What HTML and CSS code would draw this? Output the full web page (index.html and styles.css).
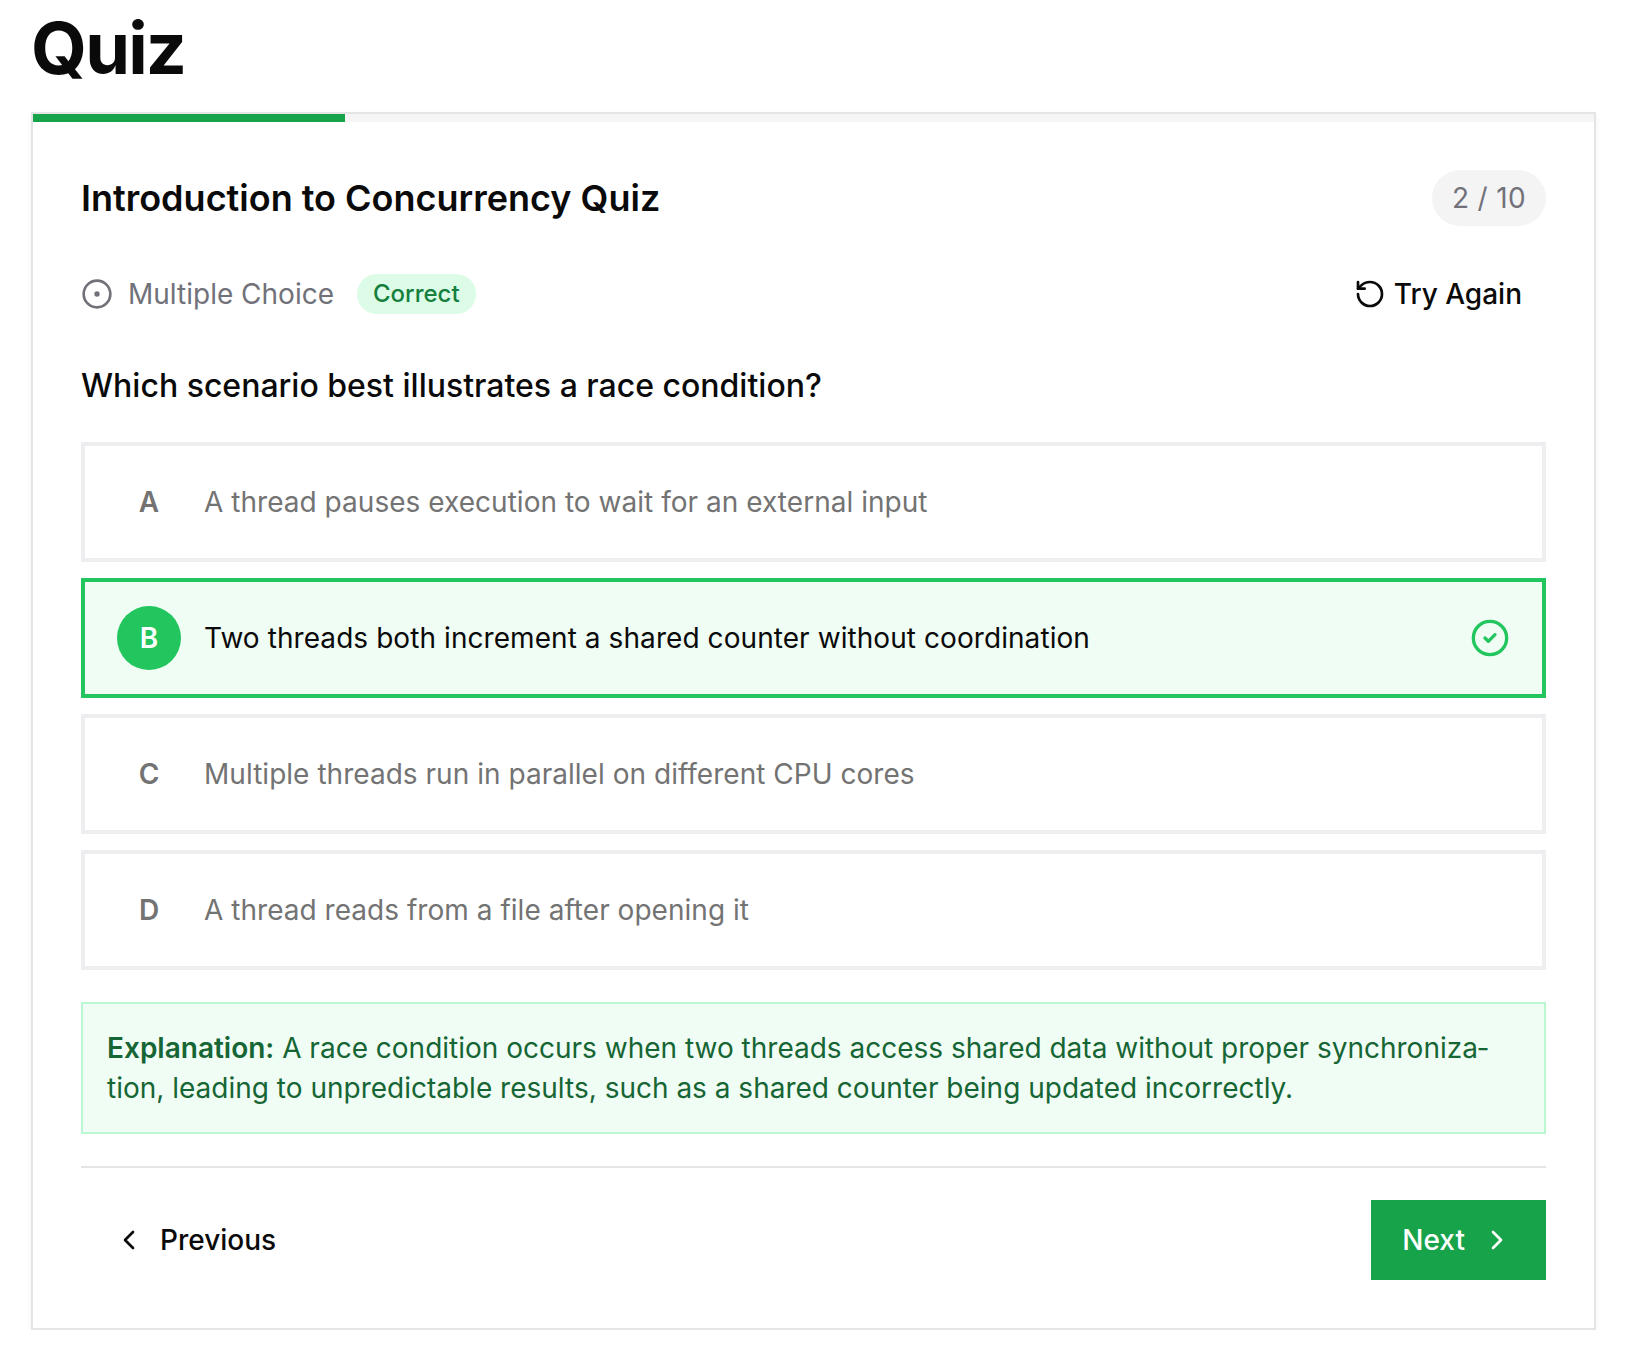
FILE: index.html
```html
<!DOCTYPE html>
<html lang="en">
  <head>
    <meta charset="UTF-8" />
    <meta name="viewport" content="width=device-width, initial-scale=1.0" />
    <title>Quiz</title>
    <link rel="stylesheet" href="styles.css">
  </head>
  <body>
    <h1 class="page-title">Quiz</h1>
    <div class="card">
      <div class="progress"><div class="progress-fill"></div></div>
      <div class="card-body">
        <div class="quiz-header">
          <h2 class="quiz-title">Introduction to Concurrency Quiz</h2>
          <div class="counter">2 / 10</div>
        </div>

        <div class="meta-row">
          <div class="meta">
            <svg class="icon" viewBox="0 0 24 24"><circle cx="12" cy="12" r="10"/><circle cx="12" cy="12" r="1"/></svg>
            <span>Multiple Choice</span>
            <span class="badge">Correct</span>
          </div>
          <button class="try-btn">
            <svg class="icon" viewBox="0 0 24 24"><path d="M3 12a9 9 0 1 0 9-9 9.75 9.75 0 0 0-6.74 2.74L3 8"/><path d="M3 3v5h5"/></svg>
            Try Again
          </button>
        </div>

        <div class="question">Which scenario best illustrates a race condition?</div>

        <div class="options">
          <div class="option">
            <div class="letter">A</div>
            <div class="option-text">A thread pauses execution to wait for an external input</div>
          </div>
          <div class="option correct">
            <div class="letter">B</div>
            <div class="option-text">Two threads both increment a shared counter without coordination</div>
            <svg class="check" viewBox="0 0 24 24"><circle cx="12" cy="12" r="10"/><path d="m9 12 2 2 4-4"/></svg>
          </div>
          <div class="option">
            <div class="letter">C</div>
            <div class="option-text">Multiple threads run in parallel on different CPU cores</div>
          </div>
          <div class="option">
            <div class="letter">D</div>
            <div class="option-text">A thread reads from a file after opening it</div>
          </div>
        </div>

        <div class="explanation">
          <strong>Explanation:</strong> A race condition occurs when two threads access shared data without proper synchroniza&shy;tion, leading to unpredictable results, such as a shared counter being updated incorrectly.
        </div>

        <div class="footer">
          <button class="nav-btn">
            <svg class="icon" viewBox="0 0 24 24"><path d="m15 18-6-6 6-6"/></svg>
            Previous
          </button>
          <button class="nav-btn next">
            Next
            <svg class="icon" viewBox="0 0 24 24"><path d="m9 18 6-6-6-6"/></svg>
          </button>
        </div>
      </div>
    </div>
  </body>
</html>
```

FILE: styles.css
```css
* {
  box-sizing: border-box;
}
body {
  margin: 0;
  padding: 0 30px 0 31px;
  font-family: Inter, "Noto Sans", sans-serif;
  color: #0a0a0a;
  background: #fff;
}
button {
  font-family: inherit;
}
.icon {
  width: 32px;
  height: 32px;
  flex-shrink: 0;
  fill: none;
  stroke: currentColor;
  stroke-width: 2;
  stroke-linecap: round;
  stroke-linejoin: round;
}
.page-title {
  margin: 0 0 16px;
  font-size: 72px;
  line-height: 96px;
  font-weight: 700;
  letter-spacing: -1.8px;
}
.card {
  border: 2px solid #e5e5e5;
  background: #fff;
  box-shadow: 0 2px 6px rgba(0, 0, 0, 0.05);
}
.progress {
  height: 8px;
  background: #f5f5f5;
}
.progress-fill {
  width: 20%;
  height: 100%;
  background: #16a34a;
}
.card-body {
  padding: 48px;
}
.quiz-header {
  display: flex;
  justify-content: space-between;
  align-items: center;
}
.quiz-title {
  margin: 0;
  font-size: 36px;
  line-height: 56px;
  font-weight: 600;
}
.counter {
  padding: 0 20px;
  height: 56px;
  line-height: 56px;
  border-radius: 28px;
  background: #f4f4f5;
  color: #71717a;
  font-size: 28px;
  letter-spacing: 0.35px;
}
.meta-row {
  display: flex;
  justify-content: space-between;
  align-items: center;
  margin-top: 32px;
  height: 72px;
}
.meta {
  display: flex;
  align-items: center;
  gap: 15px;
  color: #71717a;
  font-size: 28px;
}
.badge {
  margin-left: 8px;
  padding: 0 16px;
  height: 40px;
  line-height: 40px;
  border-radius: 20px;
  background: #dcfce7;
  color: #15803d;
  font-size: 24px;
  font-weight: 500;
}
.try-btn {
  display: flex;
  align-items: center;
  gap: 8px;
  height: 72px;
  padding: 0 24px;
  border: none;
  background: none;
  color: #0a0a0a;
  font-size: 28px;
  font-weight: 500;
}
.question {
  margin-top: 32px;
  font-size: 32px;
  line-height: 48px;
  font-weight: 500;
}
.options {
  display: flex;
  flex-direction: column;
  gap: 16px;
  margin-top: 32px;
}
.option {
  display: flex;
  align-items: center;
  gap: 23px;
  height: 120px;
  padding: 0 32px;
  border: 4px solid #eeeef0;
  color: #737373;
  font-size: 28px;
}
.letter {
  width: 64px;
  height: 64px;
  line-height: 64px;
  flex-shrink: 0;
  border-radius: 50%;
  text-align: center;
  font-weight: 600;
}
.option-text {
  flex: 1;
  letter-spacing: 0.03px;
}
.option.correct {
  border-color: #22c55e;
  background: #f0fdf4;
  color: #0a0a0a;
}
.correct .letter {
  background: #22c55e;
  color: #fff;
}
.correct .option-text {
  letter-spacing: 0.07px;
}
.check {
  width: 40px;
  height: 40px;
  flex-shrink: 0;
  fill: none;
  stroke: #22c55e;
  stroke-width: 2;
  stroke-linecap: round;
  stroke-linejoin: round;
}
.explanation {
  margin-top: 32px;
  padding: 24px;
  border: 2px solid #bbf7d0;
  background: #f0fdf4;
  color: #166534;
  font-size: 28px;
  line-height: 40px;
}
.explanation strong {
  font-weight: 600;
}
.footer {
  display: flex;
  justify-content: space-between;
  margin-top: 32px;
  padding-top: 32px;
  border-top: 2px solid #e5e5e5;
}
.nav-btn {
  display: flex;
  align-items: center;
  gap: 15px;
  height: 80px;
  padding: 0 32px;
  border: none;
  background: none;
  color: #0a0a0a;
  font-size: 28px;
  font-weight: 500;
}
.nav-btn.next {
  gap: 16px;
  padding: 0 33px 0 31px;
  background: #16a34a;
  color: #fff;
}
```
